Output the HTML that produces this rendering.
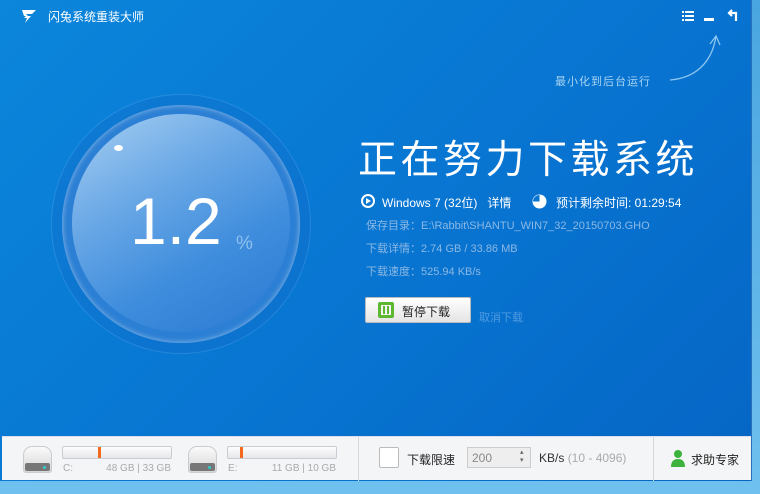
<!DOCTYPE html>
<html><head><meta charset="utf-8"><style>
*{margin:0;padding:0;box-sizing:border-box}
body{width:760px;height:494px;overflow:hidden;background:linear-gradient(180deg,#4aa6e0,#6fc0ee);font-family:"Liberation Sans","Noto Sans CJK SC",sans-serif;position:relative}
.win{position:absolute;left:0;top:0;width:752px;height:481px;background:linear-gradient(135deg,#0b86db 0%,#0876d2 50%,#0565c5 100%);border-right:1px solid #2a6fb8}
.t{position:absolute;white-space:nowrap}
.foot{position:absolute;left:2px;top:436px;width:749px;height:44px;background:#f4f5f7;border-top:1px solid #dde}
.bar{position:absolute;height:13px;border:1px solid #c9ccd2;border-radius:2px;background:linear-gradient(#fdfdfd,#e6e7ea)}
.disk{position:absolute;width:29px;height:27px;border-radius:9px 9px 3px 3px;background:linear-gradient(#fafafa,#d6d6d6);border:1px solid #ccc}
.disk:after{content:"";position:absolute;left:1px;right:1px;bottom:1px;height:8px;background:#777;border-radius:2px}
.disk:before{content:"";position:absolute;right:5px;bottom:3px;width:3px;height:3px;background:#3cc;border-radius:50%;z-index:1}
.sm{font-size:10px;color:#aaa}
.sep{position:absolute;top:0;width:1px;height:44px;background:#d8d8d8}
</style></head><body>
<div class="win">
<svg class="t" style="left:21px;top:9px" width="16" height="14" viewBox="0 0 16 14"><path d="M1 1h14l-4 4h-6l2 2h3l-6 7 2-5h-3l2-2H3z" fill="#fff"/></svg>
<div class="t" style="left:48px;top:8px;font-size:12px;color:#fff">闪兔系统重装大师</div>
<svg class="t" style="left:682px;top:11px" width="12" height="10"><rect x="0" y="0" width="2" height="2" fill="#fff"/><rect x="3" y="0" width="9" height="2" fill="#fff"/><rect x="0" y="4" width="2" height="2" fill="#fff"/><rect x="3" y="4" width="9" height="2" fill="#fff"/><rect x="0" y="8" width="2" height="2" fill="#fff"/><rect x="3" y="8" width="9" height="2" fill="#fff"/></svg>
<div class="t" style="left:704px;top:18px;width:10px;height:3px;background:#fff"></div>
<svg class="t" style="left:727px;top:9px" width="12" height="13"><path d="M5 1L2 4l3 3M2 4h7v8" stroke="#fff" stroke-width="2.2" fill="none"/></svg>
<svg class="t" style="left:660px;top:28px" width="70" height="60"><path d="M10 52C35 50 52 35 56 8M50 16l6-8 4 9" stroke="#8cc6f0" stroke-width="1.3" fill="none"/></svg>
<div class="t" style="left:555px;top:73px;font-size:11px;color:#a8d4f3;letter-spacing:1px">最小化到后台运行</div>

<div class="t" style="left:52px;top:95px;width:258px;height:258px;border-radius:50%;background:rgba(20,110,200,.35);box-shadow:0 0 0 1px rgba(120,180,240,.25)"></div>
<div class="t" style="left:62px;top:105px;width:238px;height:238px;border-radius:50%;background:#2b7fd4;box-shadow:inset 0 0 6px rgba(255,255,255,.5)"></div>
<div class="t" style="left:72px;top:114px;width:218px;height:218px;border-radius:50%;background:linear-gradient(150deg,#a8d0f2 0%,#6aa8e6 35%,#3f8ddd 65%,#2a79d2 100%)"></div>
<div class="t" style="left:114px;top:145px;width:9px;height:6px;border-radius:50%;background:#fff"></div>
<div class="t" style="left:130px;top:188px;font-size:66px;color:#fff;line-height:1">1.2</div>
<div class="t" style="left:236px;top:233px;font-size:19px;color:#8fc0ee">%</div>

<div class="t" style="left:358px;top:129px;font-size:39px;color:#fff;letter-spacing:3.5px">正在努力下载系统</div>
<svg class="t" style="left:361px;top:194px" width="14" height="14"><circle cx="7" cy="7" r="6" fill="none" stroke="#fff" stroke-width="2"/><path d="M5 4l5 3-5 3z" fill="#fff"/></svg>
<div class="t" style="left:382px;top:194px;font-size:12px;color:#fff">Windows 7 (32位)&nbsp;&nbsp;&nbsp;详情</div>
<svg class="t" style="left:532px;top:194px" width="15" height="15"><circle cx="7.5" cy="7.5" r="7" fill="#fff"/><path d="M7.5 7.5V1A6.5 6.5 0 0 0 1 7.5z" fill="#0a74d0"/></svg>
<div class="t" style="left:556px;top:194px;font-size:12px;color:#fff">预计剩余时间: 01:29:54</div>
<div class="t" style="left:366px;top:215px;font-size:11px;color:#8cb8e4;line-height:23px">保存目录：E:\Rabbit\SHANTU_WIN7_32_20150703.GHO<br>下载详情：2.74 GB / 33.86 MB<br>下载速度：525.94 KB/s</div>
<div class="t" style="left:365px;top:297px;width:106px;height:26px;background:linear-gradient(#fff,#e4e4e4);border:1px solid #bbb;border-radius:2px"></div>
<div class="t" style="left:378px;top:302px;width:16px;height:16px;background:#5cb82e;border-radius:2px"><div style="position:absolute;left:3px;top:3px;width:10px;height:10px;background:#f4f4f4"></div><div style="position:absolute;left:5px;top:4px;width:2px;height:8px;background:#5cb82e"></div><div style="position:absolute;left:9px;top:4px;width:2px;height:8px;background:#5cb82e"></div></div>
<div class="t" style="left:402px;top:303px;font-size:12px;color:#222">暂停下载</div>
<div class="t" style="left:479px;top:309px;font-size:11px;color:#4f9be0">取消下载</div>

<div class="foot">
<div class="disk" style="left:21px;top:9px"></div>
<div class="bar" style="left:60px;top:9px;width:110px"><div style="position:absolute;left:35px;top:0;width:3px;height:11px;background:#f36a1c"></div></div>
<div class="t sm" style="left:61px;top:26px">C:</div><div class="t sm" style="left:94px;top:26px;width:75px;text-align:right">48 GB | 33 GB</div>
<div class="disk" style="left:186px;top:9px"></div>
<div class="bar" style="left:225px;top:9px;width:110px"><div style="position:absolute;left:12px;top:0;width:3px;height:11px;background:#f36a1c"></div></div>
<div class="t sm" style="left:226px;top:26px">E:</div><div class="t sm" style="left:259px;top:26px;width:75px;text-align:right">11 GB | 10 GB</div>
<div class="sep" style="left:356px"></div>
<div class="t" style="left:377px;top:10px;width:20px;height:21px;background:#fff;border:1px solid #bbb;border-radius:2px"></div>
<div class="t" style="left:405px;top:14px;font-size:12px;color:#222">下载限速</div>
<div class="t" style="left:465px;top:10px;width:64px;height:21px;border:1px solid #ccc;background:#eee;font-size:12px;color:#888;padding:3px 0 0 4px">200</div>
<div class="t" style="left:518px;top:12px;font-size:7px;color:#666;line-height:8px">▴<br>▾</div>
<div class="t" style="left:537px;top:14px;font-size:12px;color:#333">KB/s <span style="color:#aaa">(10 - 4096)</span></div>
<div class="sep" style="left:651px"></div>
<svg class="t" style="left:669px;top:12px" width="14" height="18"><circle cx="7" cy="5" r="4" fill="#3db23d"/><path d="M0 18c0-6 3-8 7-8s7 2 7 8z" fill="#3db23d"/></svg>
<div class="t" style="left:689px;top:14px;font-size:12px;color:#222">求助专家</div>
</div>
</div>
</body></html>
